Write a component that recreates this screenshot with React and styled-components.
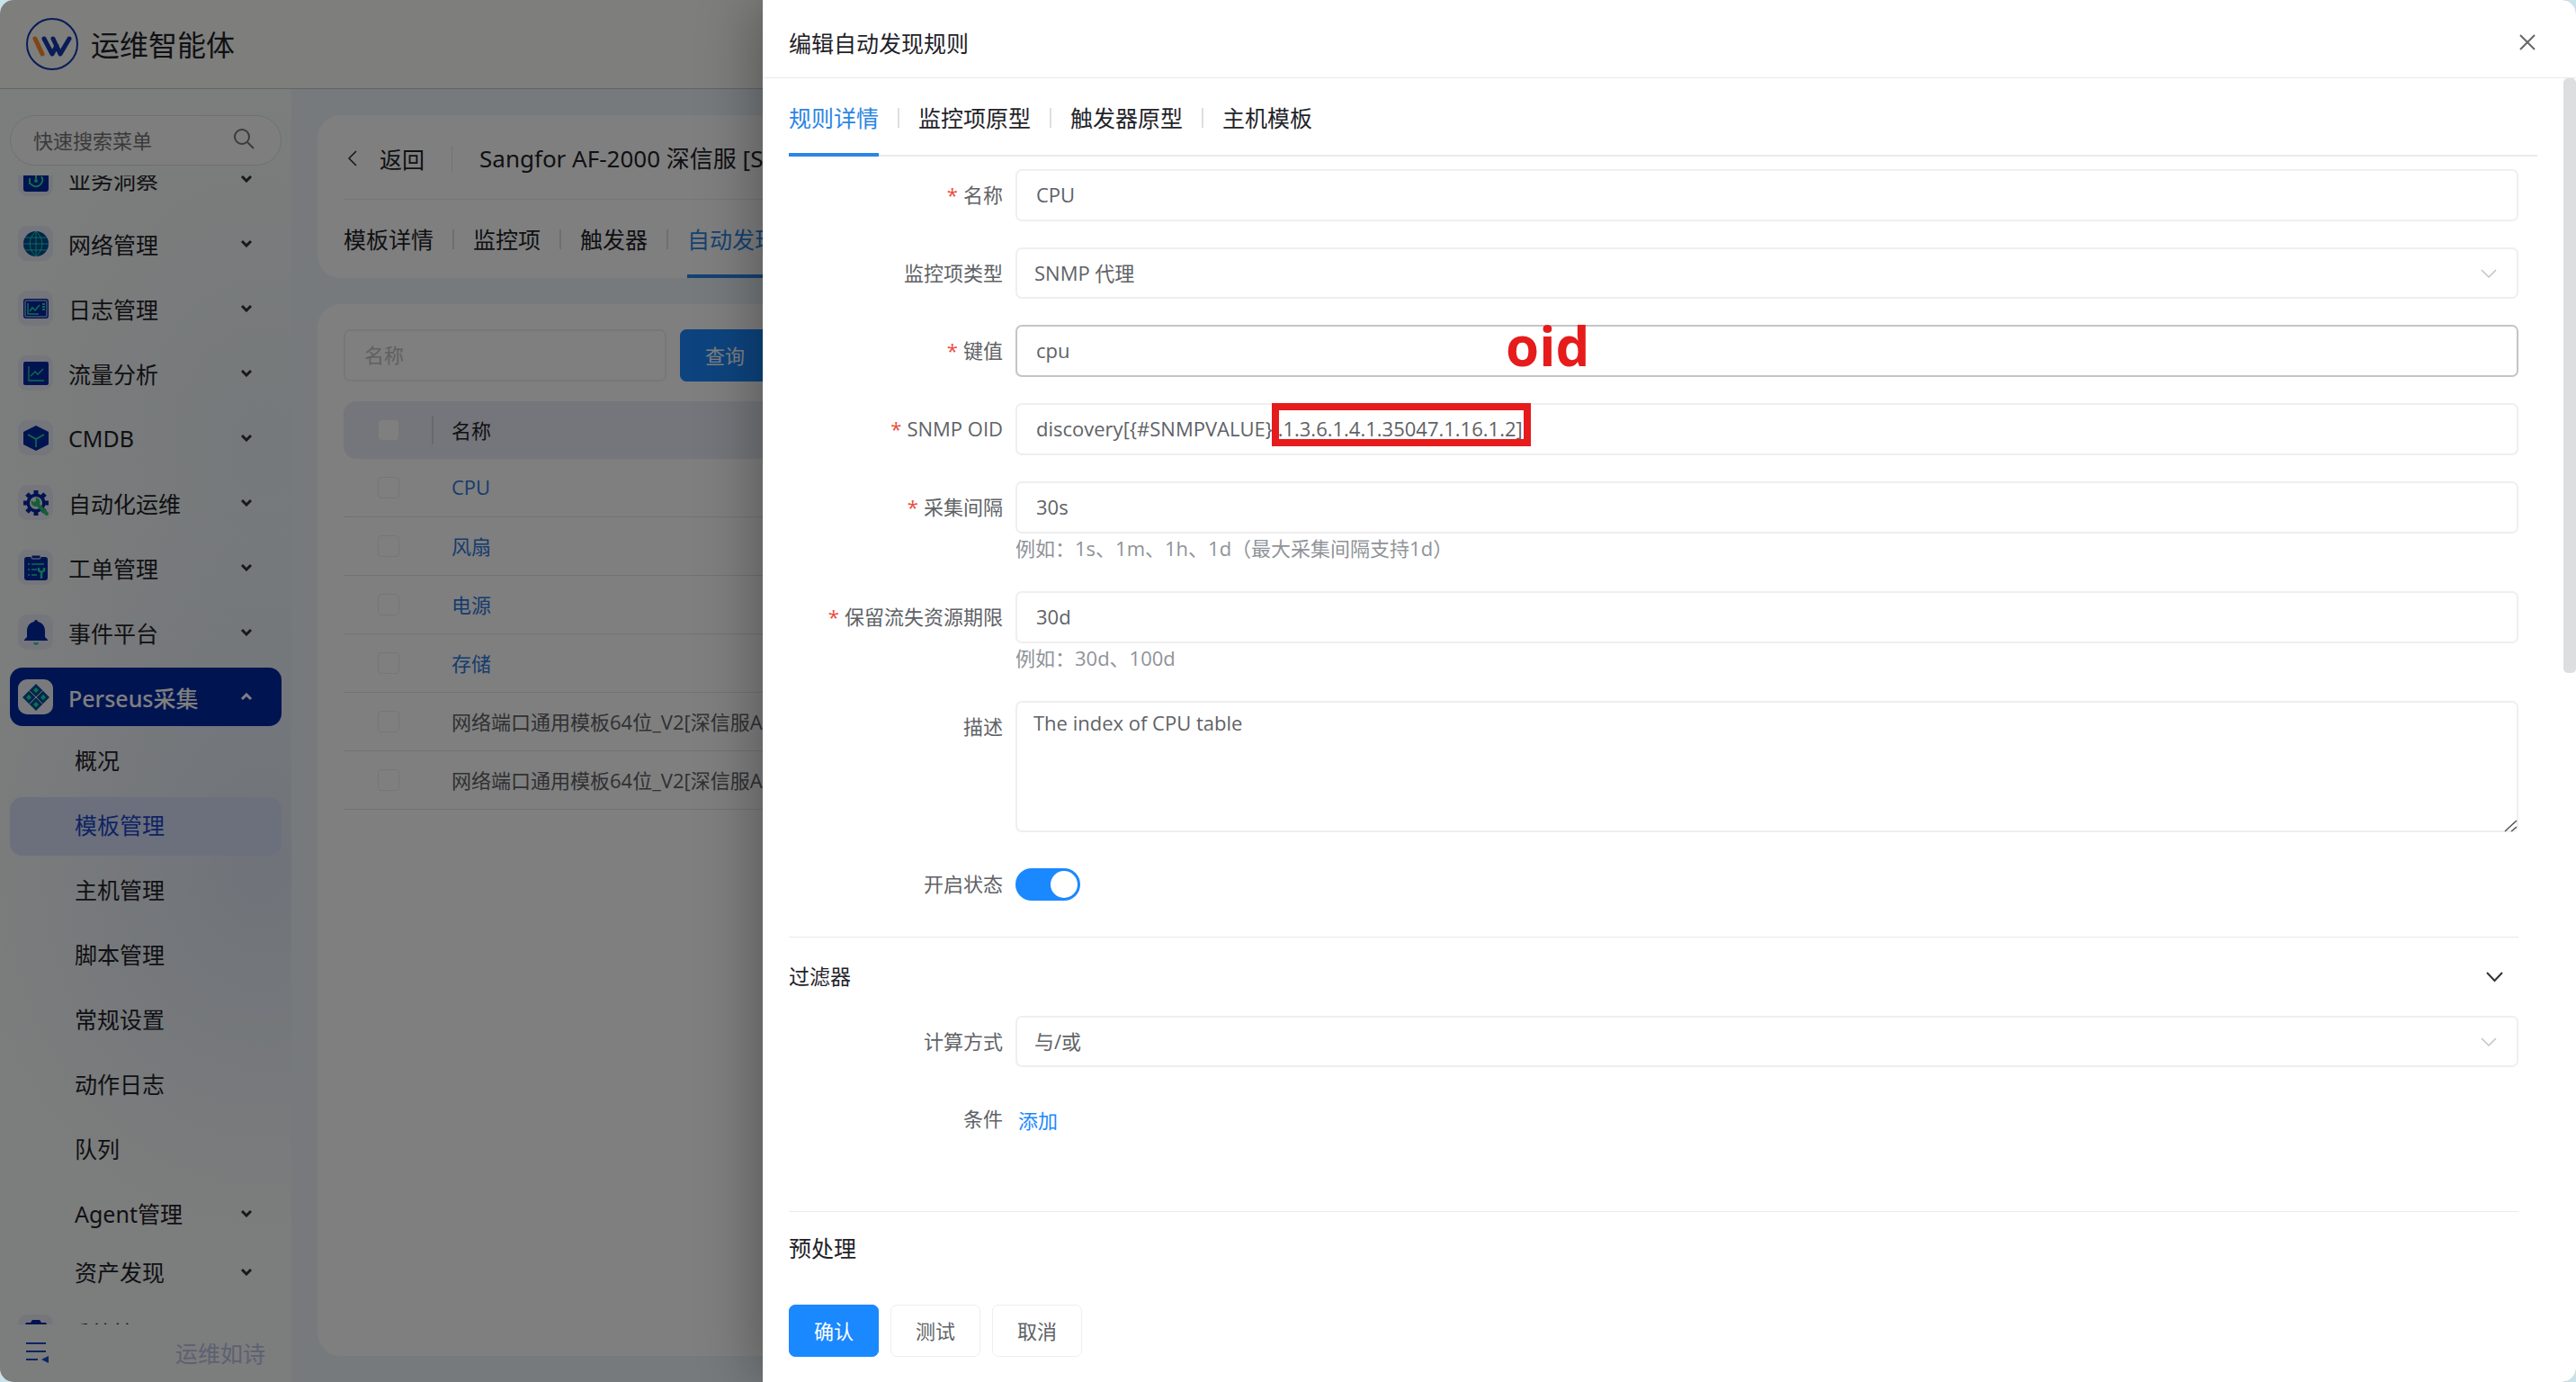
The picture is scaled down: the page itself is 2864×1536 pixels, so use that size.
import React, { useEffect, useRef, useState } from "react";
import styled, { createGlobalStyle, css } from "styled-components";

const menu = [
  { icon: "insight", label: "业务洞察" },
  { icon: "globe", label: "网络管理" },
  { icon: "log", label: "日志管理" },
  { icon: "flow", label: "流量分析" },
  { icon: "cube", label: "CMDB" },
  { icon: "auto", label: "自动化运维" },
  { icon: "order", label: "工单管理" },
  { icon: "bell", label: "事件平台" },
];

const subMenu = [
  { label: "概况" },
  { label: "模板管理", active: true },
  { label: "主机管理" },
  { label: "脚本管理" },
  { label: "常规设置" },
  { label: "动作日志" },
  { label: "队列" },
];

const subGroups = ["Agent管理", "资产发现"];

const rules = [
  { name: "CPU", link: true },
  { name: "风扇", link: true },
  { name: "电源", link: true },
  { name: "存储", link: true },
  { name: "网络端口通用模板64位_V2[深信服AF]" },
  { name: "网络端口通用模板64位_V2[深信服AF]" },
];

const NAVY = "#0029a3";
const GREEN = "#20dc9c";

const glyphs = {
  insight: (
    <>
      <rect x="0" y="0" width="28" height="28" rx="3" fill={NAVY} />
      <path d="M7 13v7M20 11a7 7 0 0 1-12 8M14 8v6" fill="none" stroke={GREEN} strokeWidth="2" />
      <circle cx="14" cy="16" r="2" fill={GREEN} />
    </>
  ),
  globe: (
    <>
      <circle cx="14" cy="14" r="14" fill="#004a98" />
      <path
        d="M14 0v28M0 14h28M2 7h24M2 21h24M14 0c-9 8-9 20 0 28M14 0c9 8 9 20 0 28"
        fill="none"
        stroke={GREEN}
        strokeWidth="1"
      />
    </>
  ),
  log: (
    <>
      <rect x="0" y="3" width="28" height="22" rx="3" fill={NAVY} />
      <rect x="2" y="5" width="24" height="18" rx="1" fill="none" stroke="#d8e2f4" />
      <path d="M5 8v12h12M7 17l3-4 3 3 5-6" fill="none" stroke={GREEN} strokeWidth="1.5" />
      <path d="M21 9h3M21 12h3M21 15h3" stroke={GREEN} strokeWidth="2" />
    </>
  ),
  flow: (
    <>
      <rect x="0" y="1" width="28" height="26" rx="2" fill={NAVY} />
      <path d="M6 6v16h17M8 17l5-5 3 3 6-6" fill="none" stroke={GREEN} strokeWidth="1.3" />
    </>
  ),
  cube: (
    <>
      <path d="M14 0l14 7v14l-14 7-14-7V7z" fill={NAVY} />
      <path d="M5 10l9 5 9-5M14 15v9" fill="none" stroke={GREEN} strokeWidth="1.6" />
    </>
  ),
  auto: (
    <>
      <circle cx="14" cy="14" r="8" fill="none" stroke={NAVY} strokeWidth="5" />
      <path
        d="M14 0v5M14 23v5M0 14h5M23 14h5M4 4l4 4M20 20l4 4M4 24l4-4M20 8l4-4"
        stroke={NAVY}
        strokeWidth="5"
      />
      <circle cx="14" cy="14" r="7" fill="#e4ebf8" />
      <path d="M15 15l11 11" stroke="#2fbf6c" strokeWidth="4" strokeLinecap="round" />
      <path d="M9 11a5 5 0 1 0 5-3v4l-3 1z" fill="#2fbf6c" />
    </>
  ),
  order: (
    <>
      <rect x="1" y="2" width="26" height="26" rx="3" fill={NAVY} />
      <rect x="9" y="0" width="10" height="4" rx="1" fill={NAVY} stroke="#e8eaf6" />
      <path d="M5 10h2M9 10h14M5 16h2M9 16h6M5 22h2M9 22h6" stroke={GREEN} strokeWidth="1.5" />
      <path d="M17 14v3l3 2 3-2v-3M20 19v7" fill="none" stroke={GREEN} strokeWidth="2.4" />
    </>
  ),
  bell: (
    <>
      <path
        d="M14 0c1.5 0 2 1 2 2 5 1 8 5 8 10v7l3 3v1H1v-1l3-3v-7c0-5 3-9 8-10 0-1 .5-2 2-2z"
        fill={NAVY}
      />
      <path d="M11 25h6c0 2-1.5 3-3 3s-3-1-3-3z" fill={GREEN} />
    </>
  ),
  perseus: (
    <>
      <path d="M14-1l15 15-15 15L-1 14z" fill="#00509a" />
      <path d="M6.5 6.5l15 15M21.5 6.5l-15 15" stroke="#e8eaf6" strokeWidth="1" />
      <path
        d="M14 3l3 3-3 3-3-3zM14 19l3 3-3 3-3-3zM6 11l3 3-3 3-3-3zM22 11l3 3-3 3-3-3z"
        fill={GREEN}
      />
    </>
  ),
  gear: (
    <>
      <path d="M10 0h8l2 3h5l2 4v14l-2 4h-5l-2 3h-8l-2-3H3l-2-4V7l2-4h5z" fill={NAVY} />
      <circle cx="14" cy="15" r="5" fill={GREEN} />
    </>
  ),
};

const Chevron = ({ w, h, stroke, color, up }) => (
  <svg width={w + 4} height={h + 4} viewBox={`-2 -2 ${w + 4} ${h + 4}`} aria-hidden="true">
    <path
      d={up ? `M0 ${h}L${w / 2} 0L${w} ${h}` : `M0 0L${w / 2} ${h}L${w} 0`}
      fill="none"
      stroke={color}
      strokeWidth={stroke}
    />
  </svg>
);

const MenuIcon = ({ name, solid }) => (
  <IconBox $solid={solid}>
    <svg width="28" height="28" viewBox="0 0 28 28" overflow="visible" aria-hidden="true">
      {glyphs[name]}
    </svg>
  </IconBox>
);

const Tabs = ({ items, active, line }) => (
  <TabList $line={line}>
    {items.map((t, i) => (
      <React.Fragment key={t}>
        {i > 0 && <TabSep />}
        <TabButton type="button" $active={i === active}>
          {t}
        </TabButton>
      </React.Fragment>
    ))}
  </TabList>
);

const Field = ({ id, label, required, hint, children }) => (
  <FieldRow>
    <FieldLabel htmlFor={id}>
      {required && <Star>*</Star>}
      {label}
    </FieldLabel>
    <FieldBody>
      {children}
      {hint && <Hint>{hint}</Hint>}
    </FieldBody>
  </FieldRow>
);

const SelectField = ({ id, value }) => (
  <SelectWrap>
    <Select id={id} defaultValue={value}>
      <option value={value}>{value}</option>
    </Select>
    <SelectArrow>
      <Chevron w={16} h={8} stroke={1.5} color="#c0c3c9" />
    </SelectArrow>
  </SelectWrap>
);

const Sidebar = () => {
  const listRef = useRef(null);

  useEffect(() => {
    listRef.current.scrollTop = 29;
  }, []);

  return (
    <Side>
      <SearchBox>
        <input type="text" placeholder="快速搜索菜单" aria-label="快速搜索菜单" />
        <svg width="24" height="24" viewBox="0 0 24 24" aria-hidden="true">
          <circle cx="10" cy="10" r="8" fill="none" stroke="#777" strokeWidth="2" />
          <path d="M16 16l7 7" stroke="#777" strokeWidth="2" />
        </svg>
      </SearchBox>
      <MenuList ref={listRef}>
        {menu.map((m) => (
          <MenuItem type="button" key={m.label}>
            <MenuIcon name={m.icon} />
            <MenuText>{m.label}</MenuText>
            <Chevron w={10} h={5} stroke={3} color="#333" />
          </MenuItem>
        ))}
        <MenuItem type="button" $open>
          <MenuIcon name="perseus" solid />
          <MenuText>Perseus采集</MenuText>
          <Chevron w={10} h={5} stroke={3} color="#fff" up />
        </MenuItem>
        {subMenu.map((m) => (
          <SubItem href="#" key={m.label} $active={m.active}>
            {m.label}
          </SubItem>
        ))}
        <MenuTail>
          {subGroups.map((g) => (
            <SubItem href="#" key={g}>
              <MenuText>{g}</MenuText>
              <Chevron w={10} h={5} stroke={3} color="#333" />
            </SubItem>
          ))}
          <MenuItem type="button">
            <MenuIcon name="gear" />
            <MenuText>系统管理</MenuText>
            <Chevron w={10} h={5} stroke={3} color="#333" />
          </MenuItem>
        </MenuTail>
      </MenuList>
      <SideFoot>
        <svg width="25" height="24" viewBox="0 0 25 24" aria-hidden="true">
          <path d="M0 2h22M0 11h22M0 20h13" stroke="#1f47c8" strokeWidth="2" />
          <path d="M17 20l8-4v8z" fill="#1f47c8" />
        </svg>
        <span>运维如诗</span>
      </SideFoot>
    </Side>
  );
};

const TemplatePage = () => (
  <Main>
    <Card>
      <BackRow>
        <BackLink href="#">
          <svg width="10" height="18" viewBox="0 0 10 18" aria-hidden="true">
            <path d="M9 1L1 9l8 8" fill="none" stroke="#222" strokeWidth="1.5" />
          </svg>
          返回
        </BackLink>
        <PageTitle>Sangfor AF-2000 深信服 [SNMP]</PageTitle>
      </BackRow>
      <Tabs items={["模板详情", "监控项", "触发器", "自动发现"]} active={3} />
    </Card>
    <Card $grow>
      <Toolbar>
        <NameInput type="text" placeholder="名称" aria-label="名称" />
        <Button type="button" $primary>
          查询
        </Button>
      </Toolbar>
      <Table>
        <colgroup>
          <col width="98" />
          <col />
        </colgroup>
        <thead>
          <tr>
            <th>
              <Check type="checkbox" aria-label="全选" />
            </th>
            <th>
              <HeadCell>名称</HeadCell>
            </th>
          </tr>
        </thead>
        <tbody>
          {rules.map((r, i) => (
            <tr key={i}>
              <td>
                <Check type="checkbox" aria-label={r.name} />
              </td>
              <td>{r.link ? <a href="#">{r.name}</a> : r.name}</td>
            </tr>
          ))}
        </tbody>
      </Table>
    </Card>
  </Main>
);

const RuleDrawer = () => {
  const [enabled, setEnabled] = useState(true);

  return (
    <Drawer role="dialog" aria-label="编辑自动发现规则">
      <DrawerHead>
        <h2>编辑自动发现规则</h2>
        <CloseButton type="button" aria-label="关闭">
          <svg width="18" height="18" viewBox="0 0 18 18" aria-hidden="true">
            <path d="M1 1l16 16M17 1L1 17" stroke="#666" strokeWidth="2" />
          </svg>
        </CloseButton>
      </DrawerHead>
      <DrawerBody>
        <Content>
          <Tabs items={["规则详情", "监控项原型", "触发器原型", "主机模板"]} active={0} line />
          <Form>
            <Field id="name" label="名称" required>
              <Input id="name" type="text" defaultValue="CPU" />
            </Field>
            <Field id="type" label="监控项类型">
              <SelectField id="type" value="SNMP 代理" />
            </Field>
            <Field id="key" label="键值" required>
              <Input id="key" type="text" defaultValue="cpu" $hover />
              <Note>oid</Note>
            </Field>
            <Field id="oid" label="SNMP OID" required>
              <Input
                id="oid"
                type="text"
                defaultValue="discovery[{#SNMPVALUE},.1.3.6.1.4.1.35047.1.16.1.2]"
              />
              <Mark />
            </Field>
            <Field id="delay" label="采集间隔" required hint="例如：1s、1m、1h、1d（最大采集间隔支持1d）">
              <Input id="delay" type="text" defaultValue="30s" />
            </Field>
            <Field id="keep" label="保留流失资源期限" required hint="例如：30d、100d">
              <Input id="keep" type="text" defaultValue="30d" />
            </Field>
            <Field id="desc" label="描述">
              <TextArea id="desc" defaultValue="The index of CPU table" />
              <Grip>
                <svg width="15" height="14" viewBox="0 0 15 14" aria-hidden="true">
                  <path d="M1 13L14 1M8 13l6-5" fill="none" stroke="#555" strokeWidth="1.5" />
                </svg>
              </Grip>
            </Field>
            <Field id="status" label="开启状态">
              <SwitchLine>
                <Switch
                  id="status"
                  type="checkbox"
                  checked={enabled}
                  onChange={(e) => setEnabled(e.target.checked)}
                />
              </SwitchLine>
            </Field>
            <Section>
              <SectionHead>
                <h3>过滤器</h3>
                <Chevron w={17} h={9} stroke={2} color="#333" />
              </SectionHead>
              <Field id="calc" label="计算方式">
                <SelectField id="calc" value="与/或" />
              </Field>
              <Field id="cond" label="条件">
                <AddButton id="cond" type="button">
                  添加
                </AddButton>
              </Field>
            </Section>
            <Section $spaced>
              <SectionHead $large>
                <h3>预处理</h3>
              </SectionHead>
            </Section>
          </Form>
        </Content>
        <ScrollTrack>
          <ScrollThumb />
        </ScrollTrack>
      </DrawerBody>
      <DrawerFoot>
        <Button type="button" $primary>
          确认
        </Button>
        <Button type="button">测试</Button>
        <Button type="button">取消</Button>
      </DrawerFoot>
    </Drawer>
  );
};

const App = () => {
  return (
    <>
      <GlobalStyle />
      <Window>
        <TopBar>
          <svg width="58" height="58" viewBox="0 0 58 58" aria-hidden="true">
            <circle cx="29" cy="29" r="28" fill="none" stroke="#1238ae" strokeWidth="2" />
            <path d="M10 23l8 17" stroke="#ff8c28" strokeWidth="5" strokeLinecap="round" />
            <path
              d="M20 23l9 17 5-9M30 23l8 17 10-17"
              fill="none"
              stroke="#1238ae"
              strokeWidth="5"
              strokeLinecap="round"
              strokeLinejoin="round"
            />
          </svg>
          <h1>运维智能体</h1>
        </TopBar>
        <Shell>
          <Sidebar />
          <TemplatePage />
        </Shell>
        <Mask />
        <RuleDrawer />
      </Window>
    </>
  );
};

const GlobalStyle = createGlobalStyle`
  * {
    box-sizing: border-box;
  }
  body {
    margin: 0;
    background: #c6e4ea;
    color: #1f2329;
    font-family: "Open Sans", "Noto Sans CJK SC", sans-serif;
    font-size: 22px;
  }
  h1, h2, h3 {
    margin: 0;
    font-weight: 400;
  }
  button, input, select, textarea {
    font-family: inherit;
    font-size: 22px;
  }
  a {
    text-decoration: none;
  }
  svg {
    display: block;
    flex: none;
  }
`;

const Window = styled.div`
  position: relative;
  display: flex;
  flex-direction: column;
  height: 100vh;
  overflow: hidden;
  border-radius: 15px;
  background: #edf4fa;
`;

const TopBar = styled.header`
  display: flex;
  align-items: center;
  gap: 14px;
  flex: none;
  height: 99px;
  padding-left: 29px;
  background: #fcfdfb;
  border-bottom: 1px solid #c4c8ce;

  h1 {
    padding-bottom: 2px;
    font-size: 32px;
  }
`;

const Shell = styled.div`
  display: flex;
  flex: 1;
  min-height: 0;
`;

const Side = styled.aside`
  display: flex;
  flex-direction: column;
  flex: none;
  width: 324px;
  padding: 29px 11px 0;
  background:
    radial-gradient(ellipse 340px 420px at 90% 60%, #dfe7f4, transparent),
    radial-gradient(ellipse 300px 420px at 90% 28%, #ebf2f6, transparent),
    #f9fbfa;
`;

const SearchBox = styled.div`
  display: flex;
  align-items: center;
  flex: none;
  height: 56px;
  margin-bottom: 11px;
  padding: 0 29px 0 25px;
  border: 1px solid #dcdfe2;
  border-radius: 28px;
  background: #fdfdfd;

  input {
    flex: 1;
    min-width: 0;
    padding: 0;
    border: 0;
    outline: 0;
    background: none;
  }
  input::placeholder {
    color: #757575;
  }
  svg {
    margin-bottom: 4px;
  }
`;

const MenuList = styled.nav`
  display: flex;
  flex-direction: column;
  gap: 7px;
  flex: 1;
  min-height: 0;
  overflow-y: auto;
  scrollbar-width: none;
`;

const item = css`
  display: flex;
  align-items: center;
  flex: none;
  height: 65px;
  border: 0;
  border-radius: 14px;
  font-family: "Noto Sans", "Noto Sans CJK SC", sans-serif;
  font-size: 25px;
  text-align: left;
`;

const MenuItem = styled.button`
  ${item}
  padding: 0 32px 0 9px;
  background: ${(p) => (p.$open ? NAVY : "none")};
  color: ${(p) => (p.$open ? "#fff" : "#1f2329")};
  font-weight: ${(p) => (p.$open ? 500 : 400)};
`;

const SubItem = styled.a`
  ${item}
  padding: 0 32px 5px 72px;
  background: ${(p) => (p.$active ? "#d7e0f8" : "none")};
  color: ${(p) => (p.$active ? "#1f47c8" : "#1f2329")};
`;

const MenuTail = styled.div`
  display: flex;
  flex-direction: column;
`;

const MenuText = styled.span`
  flex: 1;
`;

const IconBox = styled.span`
  display: flex;
  align-items: center;
  justify-content: center;
  width: 39px;
  height: 39px;
  margin-right: 17px;
  border-radius: 10px;
  background: ${(p) => (p.$solid ? "#f4f4fc" : "#ebebf8")};
`;

const SideFoot = styled.div`
  display: flex;
  align-items: center;
  justify-content: space-between;
  flex: none;
  height: 64px;
  padding: 0 18px 2px;
  color: #b9c2e4;
  font-size: 25px;
`;

const Main = styled.main`
  display: flex;
  flex-direction: column;
  gap: 29px;
  flex: 1;
  min-width: 0;
  padding: 29px;
`;

const Card = styled.section`
  flex: ${(p) => (p.$grow ? 1 : "none")};
  padding: ${(p) => (p.$grow ? "28px 29px" : "0 29px")};
  border-radius: 26px;
  background: #fff;
`;

const BackRow = styled.div`
  display: flex;
  align-items: center;
  height: 94px;
  padding-top: 2px;
  border-bottom: 1px solid #eaeaea;
  font-size: 25px;
  white-space: nowrap;
`;

const BackLink = styled.a`
  display: flex;
  align-items: center;
  gap: 25px;
  padding-left: 5px;
  color: inherit;
`;

const PageTitle = styled.h2`
  margin-left: 30px;
  padding-left: 30px;
  border-left: 1px solid #e4e4e4;
  font-family: "Noto Sans", "Noto Sans CJK SC", sans-serif;
  font-size: 26px;
  line-height: 28px;
`;

const TabList = styled.div`
  display: flex;
  align-items: center;
  height: 87px;
  box-shadow: ${(p) => (p.$line ? "inset 0 -2px #e8e9eb" : "none")};
`;

const TabButton = styled.button`
  height: 87px;
  padding: 2px 0 0;
  border: 0;
  border-bottom: 4px solid ${(p) => (p.$active ? "#2b85e4" : "transparent")};
  background: none;
  color: ${(p) => (p.$active ? "#2b85e4" : "#1f2329")};
  font-size: 25px;
  white-space: nowrap;
`;

const TabSep = styled.i`
  width: 2px;
  height: 22px;
  margin: 0 21px;
  background: #dcdee2;
`;

const Toolbar = styled.div`
  display: flex;
  gap: 15px;
  margin-bottom: 22px;
`;

const box = css`
  height: 58px;
  padding: 0 21px 2px;
  border: 2px solid #efeff1;
  border-radius: 7px;
  outline: 0;
  background: #fff;
  color: #606266;
`;

const NameInput = styled.input`
  ${box}
  width: 359px;

  &::placeholder {
    color: #bfc1c5;
  }
`;

const Button = styled.button`
  height: 58px;
  padding: 0 27px 2px;
  border: 1px solid ${(p) => (p.$primary ? "#1a88ff" : "#eceef0")};
  border-radius: 7px;
  background: ${(p) => (p.$primary ? "#1a88ff" : "#fff")};
  color: ${(p) => (p.$primary ? "#fff" : "#606266")};
`;

const Table = styled.table`
  width: 100%;
  table-layout: fixed;
  border-spacing: 0;
  color: #606266;

  th {
    height: 64px;
    padding: 0;
    background: #e9ecf7;
    font-weight: 400;
    text-align: left;
  }
  th:first-child {
    border-radius: 14px 0 0 14px;
  }
  th:last-child {
    border-radius: 0 14px 14px 0;
  }
  td {
    height: 65px;
    padding: 0 0 2px 22px;
    border-bottom: 1px solid #e2e4e8;
  }
  th:first-child,
  td:first-child {
    padding: 0 0 0 38px;
  }
  a {
    color: #2b78dc;
  }
`;

const HeadCell = styled.div`
  padding-left: 20px;
  border-left: 2px solid #cfd3de;
  color: #1f2329;
  line-height: 32px;
`;

const Check = styled.input`
  display: block;
  width: 24px;
  height: 24px;
  margin: 0;
  appearance: none;
  border: 1px solid #eaecef;
  border-radius: 4px;
  background: #fff;
`;

const Mask = styled.div`
  position: absolute;
  inset: 0;
  background: rgba(0, 0, 0, 0.5);
`;

const Drawer = styled.section`
  position: absolute;
  top: 0;
  right: 0;
  bottom: 0;
  display: flex;
  flex-direction: column;
  width: calc(100% - 848px);
  background: #fff;
  box-shadow: -8px 0 60px rgba(0, 0, 0, 0.3);
`;

const DrawerHead = styled.header`
  display: flex;
  align-items: center;
  justify-content: space-between;
  flex: none;
  height: 87px;
  padding: 7px 45px 0 29px;
  border-bottom: 1px solid #e8eaec;

  h2 {
    font-size: 25px;
  }
`;

const CloseButton = styled.button`
  padding: 0;
  border: 0;
  background: none;
`;

const DrawerBody = styled.div`
  display: flex;
  flex: 1;
  min-height: 0;
`;

const Content = styled.div`
  flex: 1;
  min-width: 0;
  overflow: hidden;
  padding: 0 29px;
`;

const ScrollTrack = styled.div`
  flex: none;
  width: 14px;
`;

const ScrollThumb = styled.div`
  height: calc(50% - 6px);
  border-radius: 5px;
  background: #dcdee0;
`;

const Form = styled.form`
  padding: 14px 21px 0 0;
`;

const FieldRow = styled.div`
  display: flex;
  margin-bottom: 29px;
`;

const FieldLabel = styled.label`
  flex: none;
  width: 252px;
  padding-right: 14px;
  color: #606266;
  line-height: 56px;
  text-align: right;
`;

const Star = styled.span`
  margin-right: 6px;
  color: #ed4a3c;
`;

const FieldBody = styled.div`
  position: relative;
  flex: 1;
  min-width: 0;
`;

const Input = styled.input`
  ${box}
  display: block;
  width: 100%;
  border-color: ${(p) => (p.$hover ? "#c3c5c8" : "#efeff1")};
`;

const SelectWrap = styled.div`
  display: flex;
  align-items: center;
  position: relative;
`;

const Select = styled.select`
  ${box}
  width: 100%;
  height: 57px;
  padding: 0 19px 2px;
  appearance: none;
`;

const SelectArrow = styled.span`
  position: absolute;
  right: 23px;
  pointer-events: none;
`;

const TextArea = styled.textarea`
  ${box}
  display: block;
  width: 100%;
  height: 146px;
  padding: 6px 18px;
  line-height: 32px;
  resize: none;
`;

const Grip = styled.span`
  position: absolute;
  right: 1px;
  bottom: 0;
`;

const Hint = styled.div`
  height: 35px;
  color: #909399;
  line-height: 32px;
`;

const Note = styled.strong`
  position: absolute;
  top: 0;
  left: 545px;
  color: #e61b1b;
  font-size: 60px;
  line-height: 46px;
  pointer-events: none;
`;

const Mark = styled.span`
  position: absolute;
  top: 0;
  left: 285px;
  width: 288px;
  height: 48px;
  border: 8px solid #e61b1b;
  pointer-events: none;
`;

const SwitchLine = styled.div`
  display: flex;
  align-items: center;
  height: 58px;
`;

const Switch = styled.input`
  width: 72px;
  height: 36px;
  margin: 0;
  padding: 3px;
  appearance: none;
  border-radius: 18px;
  background: ${(p) => (p.checked ? "#1a88ff" : "#c5c8ce")};

  &::before {
    content: "";
    display: block;
    width: 30px;
    height: 30px;
    margin-left: ${(p) => (p.checked ? "auto" : 0)};
    border-radius: 50%;
    background: #fff;
  }
`;

const Section = styled.section`
  margin-top: ${(p) => (p.$spaced ? "73px" : 0)};
  border-top: 1px solid #e8eaec;
`;

const SectionHead = styled.div`
  display: flex;
  align-items: center;
  justify-content: space-between;
  height: ${(p) => (p.$large ? "80px" : "87px")};
  padding-right: 16px;

  h3 {
    padding-bottom: 3px;
    font-size: ${(p) => (p.$large ? "25px" : "23px")};
  }
`;

const AddButton = styled.button`
  height: 58px;
  padding: 0 3px;
  border: 0;
  background: none;
  color: #1a88ff;
`;

const DrawerFoot = styled.footer`
  display: flex;
  gap: 13px;
  flex: none;
  padding: 29px 29px 28px;
`;

export default App;
